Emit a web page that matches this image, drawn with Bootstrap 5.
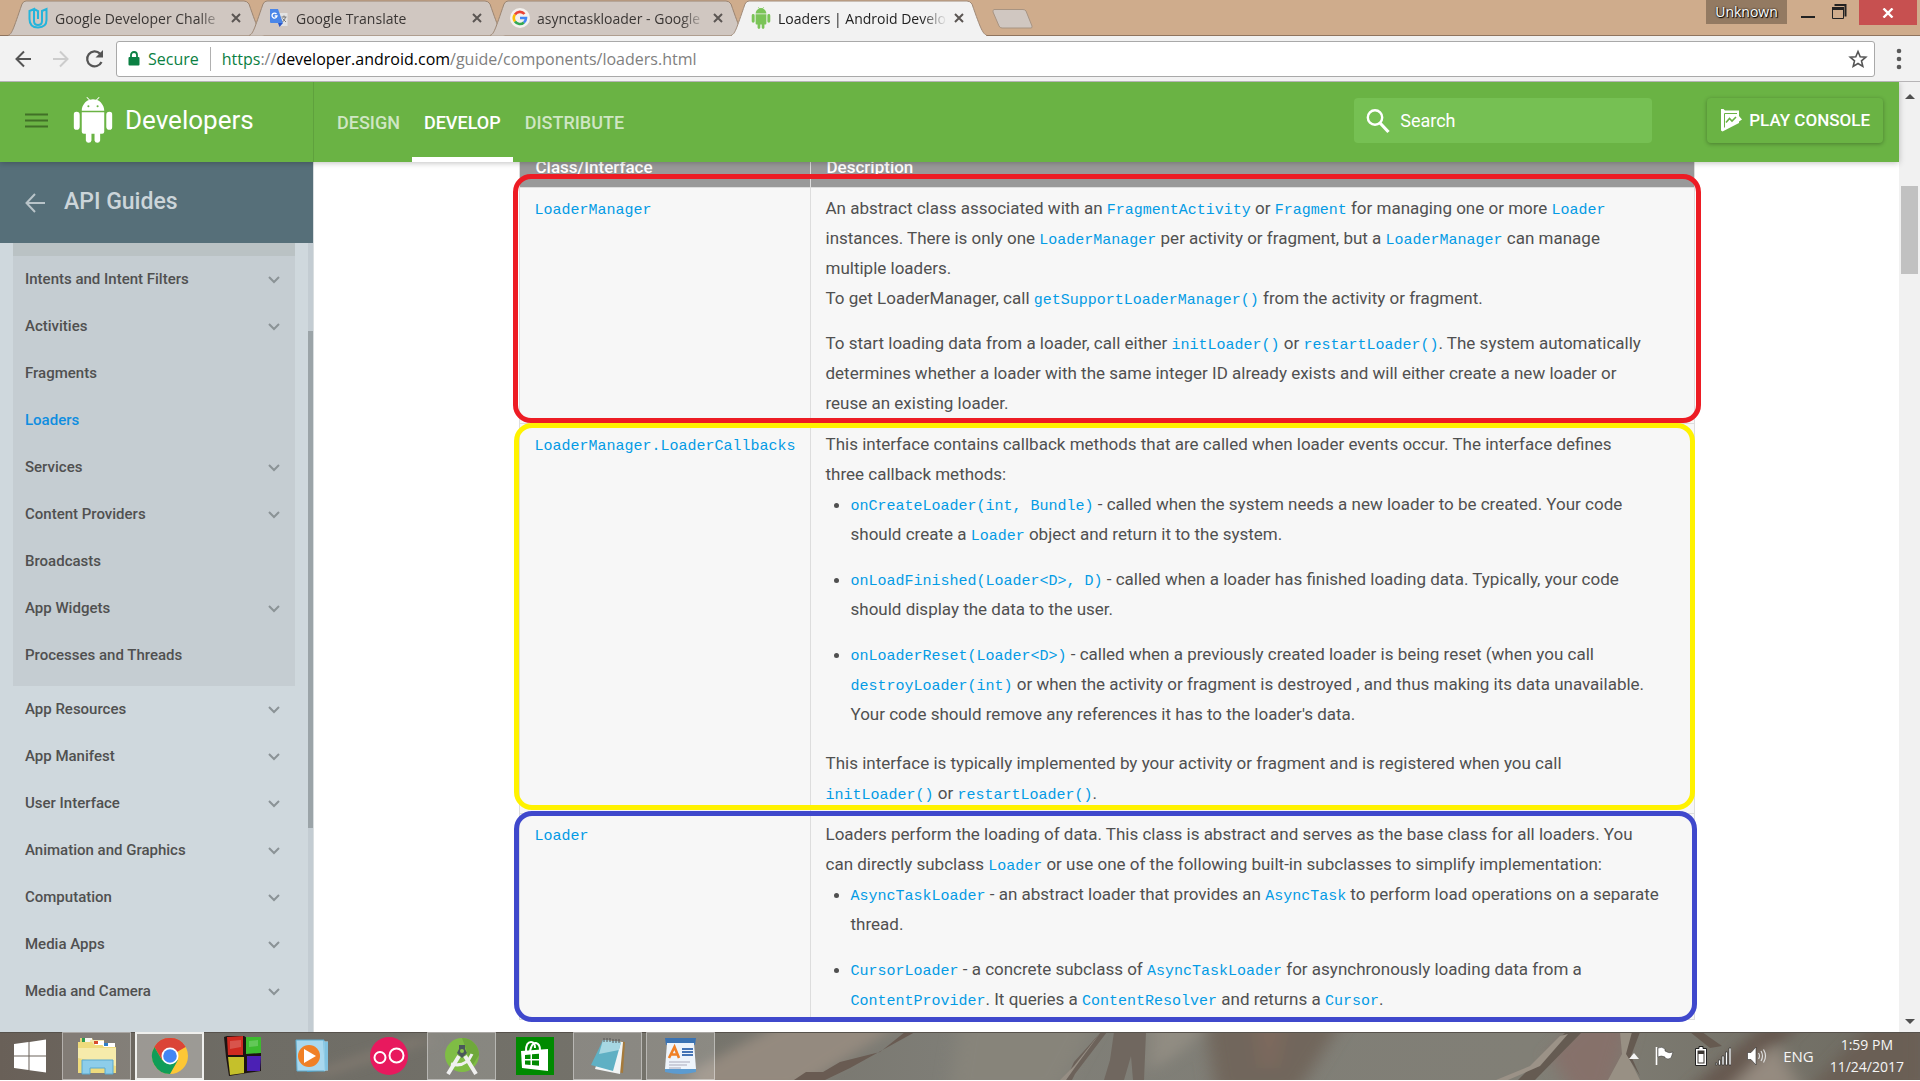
<!DOCTYPE html>
<html lang="en">
<head>
<meta charset="utf-8">
<meta name="viewport" content="width=device-width, initial-scale=1">
<title>Loaders | Android Developers</title>
<link rel="stylesheet" href="https://cdn.jsdelivr.net/npm/bootstrap@5.3.0/dist/css/bootstrap.min.css">
<style>
  body { font-family: Roboto, "Liberation Sans", sans-serif; font-size: 17px; color: #505050; background: #fff; padding-bottom: 1px; }
  button { font: inherit; color: inherit; }
  svg { display: block; flex: none; }
  a { text-decoration: none; }
  .os-text { font-family: "Open Sans", "Noto Sans", sans-serif; }

  /* browser frame */
  .tab-strip { height: 36px; background: #cfac8c; border-bottom: 1px solid #8f745e; padding-left: 8px; }
  .page-tab { position: relative; width: 256px; height: 36px; margin-right: -15px; padding: 0 23px 0 20px; gap: 7px; font-size: 14px; color: #3a3634; border: 0; background: none; }
  .page-tab .tab-shape { position: absolute; inset: 0; width: 100%; height: 100%; }
  .page-tab > *:not(.tab-shape) { position: relative; }
  .page-tab.active { color: #222; z-index: 2; }
  .tab-title { flex: 1; text-align: left; white-space: nowrap; overflow: hidden; -webkit-mask-image: linear-gradient(90deg, #000 85%, transparent); mask-image: linear-gradient(90deg, #000 85%, transparent); }
  .new-tab { margin-left: 19px; }
  .profile-btn { width: 81px; height: 24px; background: #937a62; color: #fff; border: 0; font-size: 14px; line-height: 22px; padding: 0; text-shadow: 0 0 2px #000, 1px 1px 1px #000; }
  .win-btn { border: 0; background: none; padding: 0; }
  .win-min { margin-left: 14px; }
  .win-close { width: 58px; height: 25px; background: #c75050; border: 0; margin-right: 3px; }
  .tool-bar { height: 46px; background: #f2f2f2; border-bottom: 1px solid #b6b4b6; padding: 0 10px 0 15px; }
  .omnibox { height: 36px; margin: 0 17px 0 12px; background: #fff; border: 1px solid #a9a9a9; border-radius: 3px; font-size: 16px; color: #808080; padding: 0 6px 0 11px; }
  .omnibox .ssl { color: #0b8043; }
  .omnibox .rule { width: 1px; height: 24px; background: #b0b0b0; margin: 0 11px; }

  /* site header */
  .site-header { height: 80px; background: #6ab344; color: #fff; z-index: 5; position: relative; box-shadow: 0 1px 6px rgba(0,0,0,.25); }
  .brand-area { width: 314px; border-right: 1px solid #5fa13d; padding-left: 25px; }
  .brand-name { font-size: 26px; margin-left: 11px; }
  .main-nav { padding-left: 11px; }
  .main-nav a { display: flex; align-items: center; height: 80px; padding: 0 12px; color: #cfe6c3; font-size: 18px; font-weight: 500; border-bottom: 5px solid transparent; border-top: 5px solid transparent; }
  .main-nav a.active { color: #fff; border-bottom-color: #fff; }
  .search-box { width: 298px; height: 45px; margin-bottom: 3px; background: #76c053; border-radius: 4px; padding: 0 12px; gap: 10px; }
  .search-box input { border: 0; background: none; color: #fff; outline: 0; width: 100%; padding: 0; font-size: 18px; }
  .search-box input::placeholder { color: #fff; opacity: 1; }
  .console-btn { height: 45px; margin: 0 16px 3px 55px; border: 0; border-radius: 4px; background: #6ab344; color: #fff; font-weight: 500; padding: 0 13px 0 14px; gap: 7px; box-shadow: 0 1px 4px rgba(0,0,0,.3); }

  /* guide navigation */
  .side { width: 314px; background: #cfd8dd; border-right: 1px solid #d9dee0; position: relative; }
  .side-head { height: 81px; background: #566f79; color: #ccd5d9; font-size: 23px; font-weight: 500; padding-left: 25px; gap: 18px; margin-right: -1px; }
  .side-open { margin: 0 18px 0 13px; background: #c5cdd2; border-top: 13px solid #bac2c4; padding-bottom: 7px; }
  .side a { display: flex; align-items: center; justify-content: space-between; height: 47px; padding: 0 15px 0 12px; font-size: 15px; font-weight: 500; color: #505050; }
  .side a.active { color: #0f8de0; }
  .side-rest { margin: 0 18px 0 13px; }
  .side-track { position: absolute; top: 81px; right: 0; bottom: 0; width: 5px; background: #c3ccd2; }
  .side-thumb { height: 63%; margin-top: 88px; background: #9ba4a8; }

  /* article */
  .article { margin-top: -20px; }
  .doc-table { max-width: 1176px; width: 100%; table-layout: fixed; background: #f7f7f7; line-height: 30px; }
  .doc-table, .doc-table td, .doc-table th { border: 1px solid #ddd; }
  .doc-table th { background: #999; color: #fff; font-weight: 500; height: 45px; padding: 9px 16px 5px; }
  .doc-table th:first-child { width: 291px; }
  .doc-table td { vertical-align: top; padding: 5px 15px; }
  .doc-table tr { position: relative; }
  .doc-table code { font-family: "Liberation Mono", "DejaVu Sans Mono", monospace; font-size: 15px; line-height: 1; color: #039be5; white-space: nowrap; }
  .doc-table p { margin: 0 0 15px; }
  .doc-table p:last-child { margin-bottom: 0; }
  .doc-table ul { margin: 0 0 19px; padding-left: 25px; }
  .doc-table ul:last-child { margin-bottom: 0; }
  .doc-table li + li { margin-top: 15px; }
  .pen-frame { position: absolute; border: 5px solid; border-radius: 18px; pointer-events: none; }
  .pen-red { border-color: #ed1c24; inset: -14px -7px 1px -6px; z-index: 2; }
  .pen-yellow { border-color: #fff200; inset: -1px -1px 4px -5px; }
  .pen-blue { border-color: #3f48cc; inset: -3px -3px -2px -5px; }
  .page-scroll { width: 21px; background: #f1f1f1; }
  .page-scroll .thumb { width: 17px; height: 88px; margin-bottom: auto; margin-top: 87px; background: #c1c1c1; }

  /* desktop bar */
  .task-bar { position: relative; height: 48px; background: #6f6a61; color: #f5f5f5; font-size: 15px; }
  .task-scene { position: absolute; inset: 0; width: 100%; height: 100%; }
  .task-bar > *:not(.task-scene) { position: relative; }
  .start-btn { width: 62px; padding-left: 14px; }
  .task-item { width: 69px; height: 48px; margin-right: 4px; border: 1px solid transparent; background: none; padding: 0; display: flex; align-items: center; justify-content: center; }
  .task-item.open { border-color: rgba(255,255,255,.4); background: rgba(255,255,255,.16); }
  .task-item.front { border: 2px solid #efefed; background: rgba(255,255,255,.32); }
  .clock-text { line-height: 22px; font-size: 14px; }
</style>
</head>
<body class="d-flex flex-column vh-100 overflow-hidden">

<svg width="0" height="0" class="position-absolute" aria-hidden="true">
  <defs>
    <symbol id="chev" viewBox="0 0 12 8"><path d="M1 1l5 5 5-5" fill="none" stroke="#8b9396" stroke-width="2"/></symbol>
    <symbol id="cross" viewBox="0 0 10 10"><path d="M1 1l8 8M9 1L1 9" stroke="#5b5653" stroke-width="2"/></symbol>
    <symbol id="tab-off" viewBox="0 0 256 36" preserveAspectRatio="none"><path d="M0 35.500C4 34 5 30 14 4Q15.500 1 18 1H236Q239 1 241 4C250 30 252 34 256 35.500" fill="#d0c7c1" stroke="#9b8572"/></symbol>
    <symbol id="tab-on" viewBox="0 0 256 36" preserveAspectRatio="none"><path d="M0 35.500C4 34 5 30 14 4Q15.500 1 18 1H236Q239 1 241 4C250 30 252 34 256 35.500" fill="#f2f2f2" stroke="#a08a78"/><path d="M1 36H255" stroke="#f2f2f2" stroke-width="2"/></symbol>
    <symbol id="robot" viewBox="0 0 38 45"><path d="M8 13.500C8 8 12 4 15 3L12.500.4 13.300 0 16 2.700Q19 1.900 22 2.700L24.700 0 25.500.4 23 3C26 4 30 8 30 13.500ZM8 15H30V34Q30 36 28 36H26V42.500A2.800 2.800 0 0 1 20.500 42.500V36H17.500V42.500A2.800 2.800 0 0 1 12 42.500V36H10Q8 36 8 34ZM0 17.500A3 3 0 0 1 6 17.500V29A3 3 0 0 1 0 29ZM32 17.500A3 3 0 0 1 38 17.500V29A3 3 0 0 1 32 29Z"/></symbol>
  </defs>
</svg>

<div class="tab-strip os-text d-flex align-items-start flex-shrink-0" role="tablist">
  <button class="page-tab d-flex align-items-center" role="tab"><svg class="tab-shape"><use href="#tab-off"/></svg>
    <svg width="20" height="22" viewBox="0 0 20 22"><path d="M1.500 4L6 2V14Q6 18 10 18Q14 18 14 14V4L18.500 2V13Q18.500 20 10 20.500Q1.500 20.500 1.500 12ZM6 2L10 4V12" fill="none" stroke="#25b4db" stroke-width="2"/></svg>
    <span class="tab-title">Google Developer Challe</span><svg width="10" height="10"><use href="#cross"/></svg></button>
  <button class="page-tab d-flex align-items-center" role="tab"><svg class="tab-shape"><use href="#tab-off"/></svg>
    <svg width="20" height="20" viewBox="0 0 20 20"><path d="M8 5H18.500V18H12Z" fill="#e3e3e3"/><path d="M1 1H9L14 15H2Q1 15 1 14Z" fill="#4a86e8"/><path d="M9 15H14L10.500 19Z" fill="#2a56c6"/><path d="M7.500 6A2.500 2.500 0 1 0 8 8H5.700" fill="none" stroke="#fff" stroke-width="1.300"/><path d="M12.500 9H17.500M15 7.500V9M16.500 9Q16 12 13.500 14M13.500 10.500L17 14" fill="none" stroke="#777" stroke-width="1"/></svg>
    <span class="tab-title">Google Translate</span><svg width="10" height="10"><use href="#cross"/></svg></button>
  <button class="page-tab d-flex align-items-center" role="tab"><svg class="tab-shape"><use href="#tab-off"/></svg>
    <svg width="20" height="20" viewBox="0 0 20 20"><circle cx="10" cy="10" r="10" fill="#f4f1ee"/><g fill="none" stroke-width="2.600"><path d="M5 6.500A6 6 0 0 1 14.500 6" stroke="#ea4335"/><path d="M5 13.500A6 6 0 0 1 5 6.500" stroke="#fbbc05"/><path d="M13.900 14.500A6 6 0 0 1 5 13.500" stroke="#34a853"/><path d="M10 10H16A6 6 0 0 1 13.900 14.500" stroke="#4285f4"/></g></svg>
    <span class="tab-title">asynctaskloader - Google</span><svg width="10" height="10"><use href="#cross"/></svg></button>
  <button class="page-tab active d-flex align-items-center" role="tab" aria-selected="true"><svg class="tab-shape"><use href="#tab-on"/></svg>
    <svg width="20" height="22" fill="#7ac457"><use href="#robot"/></svg>
    <span class="tab-title">Loaders | Android Develo</span><svg width="10" height="10"><use href="#cross"/></svg></button>
  <button class="win-btn new-tab pt-2" aria-label="New tab"><svg width="44" height="22" viewBox="0 0 44 22"><path d="M3 1.500H32Q34 1.500 35 3L41 18Q41.500 20 40 20H11Q9 20 8 18L2 4Q1.500 2 3 1.500Z" fill="#d0c7c1" stroke="#a89482"/></svg></button>
  <div class="ms-auto d-flex align-items-start">
    <button class="profile-btn">Unknown</button>
    <button class="win-btn win-min" aria-label="Minimize"><svg width="14" height="24"><path d="M0 17H14" stroke="#222" stroke-width="2"/></svg></button>
    <button class="win-btn mx-2 ps-2" aria-label="Restore"><svg width="20" height="22" viewBox="0 0 20 22"><path d="M3.500 5H14.500V16.500" fill="none" stroke="#222" stroke-width="2"/><path d="M1.500 9V18.500H12.500V9" fill="none" stroke="#222" stroke-width="1"/><path d="M1 8.500H13" stroke="#222" stroke-width="3"/></svg></button>
    <button class="win-close d-flex justify-content-center align-items-center" aria-label="Close"><svg width="12" height="10" viewBox="0 0 12 10"><path d="M1.500 0.500L10.500 9.500M10.500 0.500L1.500 9.500" stroke="#fff" stroke-width="2.400"/></svg></button>
  </div>
</div>

<div class="tool-bar d-flex align-items-center flex-shrink-0">
  <button class="win-btn" aria-label="Back"><svg width="17" height="18" viewBox="0 0 17 18"><path d="M9 1.500L1.500 9L9 16.500M1.500 9H16" fill="none" stroke="#555" stroke-width="2"/></svg></button>
  <button class="win-btn ms-3 ps-1" aria-label="Forward"><svg width="17" height="18" viewBox="0 0 17 18"><path d="M8 1.500L15.500 9L8 16.500M15.500 9H1" fill="none" stroke="#ccc" stroke-width="2"/></svg></button>
  <button class="win-btn ms-3" aria-label="Reload"><svg width="19" height="20" viewBox="0 0 19 20"><path d="M16.500 13A7.500 7.500 0 1 1 15 4.600" fill="none" stroke="#555" stroke-width="2.200"/><path d="M18 1V8.500H10.500Z" fill="#555"/></svg></button>
  <div class="omnibox os-text flex-grow-1 d-flex align-items-center">
    <svg width="12" height="15" viewBox="0 0 12 15"><path d="M3 7V4A3 3 0 0 1 9 4V7" fill="none" stroke="#0b8043" stroke-width="1.800"/><rect x="0.500" y="6" width="11" height="8.500" rx="1" fill="#0b8043"/></svg>
    <span class="ssl ms-2">Secure</span><span class="rule"></span>
    <span><span class="ssl">https</span>://<span class="text-black">developer.android.com</span>/guide/components/loaders.html</span>
    <svg class="ms-auto" width="20" height="20" viewBox="0 0 20 20"><path d="M10 2.500L12.200 7.700L17.800 8.200L13.500 11.900L14.800 17.400L10 14.500L5.200 17.400L6.500 11.900L2.200 8.200L7.800 7.700Z" fill="none" stroke="#555" stroke-width="1.600"/></svg>
  </div>
  <button class="win-btn me-2 ms-1" aria-label="Menu"><svg width="6" height="22" fill="#5a5a5a"><circle cx="3" cy="3" r="2.300"/><circle cx="3" cy="11" r="2.300"/><circle cx="3" cy="19" r="2.300"/></svg></button>
</div>

<div class="d-flex flex-grow-1 overflow-hidden">
  <div class="d-flex flex-column flex-grow-1">
    <header class="site-header d-flex align-items-center flex-shrink-0">
      <div class="brand-area d-flex align-items-center h-100 pb-1">
        <button class="win-btn" aria-label="Menu"><svg width="23" height="15"><path d="M0 1.500H23M0 7.500H23M0 13.500H23" stroke="#417027" stroke-width="2"/></svg></button>
        <svg class="ms-4" width="42" height="46" viewBox="0 0 38 45"><use href="#robot" fill="#fff"/><circle cx="14.500" cy="9" r="1" fill="#6ab344"/><circle cx="23.500" cy="9" r="1" fill="#6ab344"/></svg>
        <span class="brand-name">Developers</span>
      </div>
      <nav class="main-nav d-flex">
        <a href="#">DESIGN</a><a href="#" class="active">DEVELOP</a><a href="#">DISTRIBUTE</a>
      </nav>
      <div class="search-box d-flex align-items-center ms-auto">
        <svg width="24" height="26" viewBox="0 0 24 26"><circle cx="9" cy="9.500" r="7.200" fill="none" stroke="#fff" stroke-width="2.400"/><path d="M14 15L22.500 24" stroke="#fff" stroke-width="3.200"/></svg>
        <input type="text" placeholder="Search" aria-label="Search">
      </div>
      <button class="console-btn d-flex align-items-center">
        <svg width="21" height="23" viewBox="0 0 21 23"><path d="M0 0H2.500L4 1.500H18V7L21 10.500L18 12.500V14L1.500 22.500L0 21.500Z" fill="#fff"/><path d="M3.500 4.500H16M3.500 4.500V18.500" stroke="#6ab344" stroke-width="1" fill="none"/><path d="M5 13.500L8.500 9.500L11 12L15 8" stroke="#6ab344" stroke-width="1.600" fill="none"/></svg>
        PLAY CONSOLE</button>
    </header>

    <div class="d-flex flex-grow-1 overflow-hidden">
      <aside class="side flex-shrink-0 overflow-hidden">
        <div class="side-head d-flex align-items-center">
          <svg width="21" height="20" viewBox="0 0 21 20"><path d="M10 1L1.500 10L10 19M1.500 10H20" fill="none" stroke="#b9c4c9" stroke-width="2"/></svg>API Guides</div>
        <nav class="side-open">
          <a href="#">Intents and Intent Filters<svg width="12" height="8"><use href="#chev"/></svg></a>
          <a href="#">Activities<svg width="12" height="8"><use href="#chev"/></svg></a>
          <a href="#">Fragments</a>
          <a href="#" class="active">Loaders</a>
          <a href="#">Services<svg width="12" height="8"><use href="#chev"/></svg></a>
          <a href="#">Content Providers<svg width="12" height="8"><use href="#chev"/></svg></a>
          <a href="#">Broadcasts</a>
          <a href="#">App Widgets<svg width="12" height="8"><use href="#chev"/></svg></a>
          <a href="#">Processes and Threads</a>
        </nav>
        <nav class="side-rest">
          <a href="#">App Resources<svg width="12" height="8"><use href="#chev"/></svg></a>
          <a href="#">App Manifest<svg width="12" height="8"><use href="#chev"/></svg></a>
          <a href="#">User Interface<svg width="12" height="8"><use href="#chev"/></svg></a>
          <a href="#">Animation and Graphics<svg width="12" height="8"><use href="#chev"/></svg></a>
          <a href="#">Computation<svg width="12" height="8"><use href="#chev"/></svg></a>
          <a href="#">Media Apps<svg width="12" height="8"><use href="#chev"/></svg></a>
          <a href="#">Media and Camera<svg width="12" height="8"><use href="#chev"/></svg></a>
        </nav>
        <div class="side-track"><div class="side-thumb"></div></div>
      </aside>

      <main class="flex-grow-1 overflow-hidden">
        <div class="article">
          <table class="doc-table mx-auto">
            <thead><tr><th>Class/Interface</th><th>Description</th></tr></thead>
            <tbody>
              <tr>
                <td><a href="#"><code>LoaderManager</code></a><span class="pen-frame pen-red"></span></td>
                <td>An abstract class associated with an <a href="#"><code>FragmentActivity</code></a> or <a href="#"><code>Fragment</code></a> for managing one or more <a href="#"><code>Loader</code></a><br>instances. There is only one <a href="#"><code>LoaderManager</code></a> per activity or fragment, but a <a href="#"><code>LoaderManager</code></a> can manage<br>multiple loaders.
                  <p>To get LoaderManager, call <a href="#"><code>getSupportLoaderManager()</code></a> from the activity or fragment.</p>
                  <p>To start loading data from a loader, call either <a href="#"><code>initLoader()</code></a> or <a href="#"><code>restartLoader()</code></a>. The system automatically<br>determines whether a loader with the same integer ID already exists and will either create a new loader or<br>reuse an existing loader.</p></td>
              </tr>
              <tr>
                <td><a href="#"><code>LoaderManager.LoaderCallbacks</code></a><span class="pen-frame pen-yellow"></span></td>
                <td>This interface contains callback methods that are called when loader events occur. The interface defines<br>three callback methods:
                  <ul>
                    <li><a href="#"><code>onCreateLoader(int, Bundle)</code></a> - called when the system needs a new loader to be created. Your code<br>should create a <a href="#"><code>Loader</code></a> object and return it to the system.</li>
                    <li><a href="#"><code>onLoadFinished(Loader&lt;D&gt;, D)</code></a> - called when a loader has finished loading data. Typically, your code<br>should display the data to the user.</li>
                    <li><a href="#"><code>onLoaderReset(Loader&lt;D&gt;)</code></a> - called when a previously created loader is being reset (when you call<br><a href="#"><code>destroyLoader(int)</code></a> or when the activity or fragment is destroyed , and thus making its data unavailable.<br>Your code should remove any references it has to the loader's data.</li>
                  </ul>
                  <p>This interface is typically implemented by your activity or fragment and is registered when you call<br><a href="#"><code>initLoader()</code></a> or <a href="#"><code>restartLoader()</code></a>.</p></td>
              </tr>
              <tr>
                <td><a href="#"><code>Loader</code></a><span class="pen-frame pen-blue"></span></td>
                <td>Loaders perform the loading of data. This class is abstract and serves as the base class for all loaders. You<br>can directly subclass <a href="#"><code>Loader</code></a> or use one of the following built-in subclasses to simplify implementation:
                  <ul>
                    <li><a href="#"><code>AsyncTaskLoader</code></a> - an abstract loader that provides an <a href="#"><code>AsyncTask</code></a> to perform load operations on a separate<br>thread.</li>
                    <li><a href="#"><code>CursorLoader</code></a> - a concrete subclass of <a href="#"><code>AsyncTaskLoader</code></a> for asynchronously loading data from a<br><a href="#"><code>ContentProvider</code></a>. It queries a <a href="#"><code>ContentResolver</code></a> and returns a <a href="#"><code>Cursor</code></a>.</li>
                  </ul></td>
              </tr>
            </tbody>
          </table>
        </div>
      </main>
    </div>
  </div>
  <div class="page-scroll d-flex flex-column align-items-center flex-shrink-0 position-relative py-2">
    <svg class="mt-1" width="10" height="5"><path d="M0 5L5 0L10 5Z" fill="#505050"/></svg>
    <div class="thumb"></div>
    <svg width="10" height="5"><path d="M0 0L5 5L10 0Z" fill="#505050"/></svg>
  </div>
</div>

<footer class="task-bar os-text d-flex align-items-center flex-shrink-0">
  <svg class="task-scene" viewBox="0 0 1920 48" preserveAspectRatio="none">
    <defs>
      <linearGradient id="wall"><stop offset="0" stop-color="#696058"/><stop offset=".12" stop-color="#6e6c65"/><stop offset=".36" stop-color="#75736b"/><stop offset=".5" stop-color="#7f7e77"/><stop offset=".8" stop-color="#817f76"/><stop offset="1" stop-color="#6d6a60"/></linearGradient>
      <filter id="soft" x="-10%" y="-50%" width="120%" height="200%"><feGaussianBlur stdDeviation="9 5"/></filter>
    </defs>
    <rect width="1920" height="48" fill="url(#wall)"/>
    <g filter="url(#soft)">
      <path d="M310 40L420 4L430 10L320 46Z" fill="#817970"/>
      <path d="M780 -8H900L800 56H690V40Z" fill="#948a7f"/>
      <path d="M960 -8H1095L1060 56H950Z" fill="#87847a"/>
      <path d="M1150 -8H1210L1180 20L1150 40Z" fill="#918c82"/>
      <path d="M1205 -8H1340L1300 56H1215Z" fill="#71665c"/>
      <path d="M1255 -8H1285L1275 36H1262Z" fill="#7e695d"/>
      <path d="M1550 22L1580 -8H1630L1612 56H1570Z" fill="#86716a"/>
      <path d="M1690 56L1765 -8H1800L1735 56Z" fill="#66584f"/>
      <path d="M1730 56L1775 10L1800 56Z" fill="#958b80"/>
      <path d="M1810 56L1870 -8H1925V56Z" fill="#6b5e54"/>
    </g>
    <path d="M905 0H915L850 36L825 48H794L806 40L823 40L840 30L880 20Z" fill="#695b52"/>
    <path d="M1101 0H1107L1075 42L1072 48H1066L1074 30Z" fill="#6c625a"/>
    <path d="M1101 0L1074 34L1060 48H1066L1076 34Z" fill="#968e84"/>
    <path d="M1114 0H1146L1144 48H1133L1131 24L1124 48H1104L1110 28Z" fill="#70675f"/>
    <path d="M1566 0H1582L1535 48H1518L1530 36Z" fill="#655b52"/>
    <path d="M1560 4L1530 34L1496 48H1508L1540 34L1568 2Z" fill="#9b9287"/>
    <path d="M1620 0H1638L1628 24L1640 48H1608L1622 22Z" fill="#989084"/>
    <path d="M1632 0H1640L1631 24L1640 44L1626 22Z" fill="#655a51"/>
    <path d="M1690 0H1702L1722 14L1710 16Z" fill="#665a50"/>
    <path d="M0 .5H1920" stroke="#57524c"/>
  </svg>
  <button class="win-btn start-btn" aria-label="Start"><svg width="34" height="34" viewBox="0 0 34 34"><path d="M0 5L14.500 3V16.500H0ZM15.500 2.900L32 .5V16.500H15.500ZM0 17.500H14.500V31L0 29ZM15.500 17.500H32V33.500L15.500 31.200Z" fill="#fff"/></svg></button>
  <button class="task-item open" aria-label="File Explorer"><svg width="42" height="40" viewBox="0 0 42 40"><path d="M4 2L16 2L18 6H4Z" fill="#e5d27d"/><path d="M6 2h10v6H6z" fill="#f5f5ef"/><path d="M6 2h3v4H6z" fill="#2c9c50"/><path d="M14 4H28V10H14Z" fill="#f3e7ae"/><path d="M19 5h9v4h-9z" fill="#fff"/><path d="M18 5h4v3h-4z" fill="#d84a2c"/><path d="M27 7h12v5H27z" fill="#fff"/><path d="M28 7h4v3h-4z" fill="#2f80c8"/><path d="M2 6H16L18 9H26L28 11H40V37H2Z" fill="#efdb7d"/><path d="M2 12H40V30L2 22Z" fill="#f6ebab"/><path d="M6 24H37V38H29V32H14V38H6Z" fill="#8dcdea" stroke="#5aa9cf"/></svg></button>
  <button class="task-item front" aria-label="Chrome"><svg width="38" height="38" viewBox="0 0 38 38"><circle cx="19" cy="19" r="18" fill="#fdc735"/><path d="M19 19L3.400 10A18 18 0 0 1 34.600 10Z" fill="#db4437"/><path d="M19 10H34.600A18 18 0 0 0 3.400 10L11 23Z" fill="#db4437"/><path d="M3.400 10A18 18 0 0 0 19 37L27 23L19 27L11 23Z" fill="#109d58"/><circle cx="19" cy="19" r="8.500" fill="#fff"/><circle cx="19" cy="19" r="6.800" fill="#4286f4"/></svg></button>
  <button class="task-item" aria-label="Blocks"><svg width="38" height="42" viewBox="0 0 38 42"><path d="M0 2L3 1L20 1L23 3L37 2V36L23 38L5 41L2 22Z" fill="#1d1412"/><path d="M3 2L19 1V20H4Z" fill="#cf2a20"/><path d="M22 2L37 2V18L22 19Z" fill="#3dbb2f"/><path d="M4 22H20L20 38L6 40Z" fill="#c5c02b"/><path d="M23 21H37L36 36L23 36Z" fill="#4b20b4"/><path d="M6 6L17 5V12L6 14ZM25 6L34 5V11L25 12Z" fill="#fff" opacity=".2"/></svg></button>
  <button class="task-item pe-2" aria-label="Media Player"><svg width="34" height="36" viewBox="0 0 34 36"><path d="M12 2L33 4V32L12 34Z" fill="#3f9cc9"/><path d="M1 2H29L30 33H2Z" fill="#a9d8ee" stroke="#5cadd2"/><path d="M30 3V33M32 3V33" stroke="#c4e8f7"/><circle cx="14" cy="18" r="11" fill="#f08026"/><path d="M9 11L21 18L9 25Z" fill="#fff"/></svg></button>
  <button class="task-item" aria-label="Recorder"><svg width="38" height="38" viewBox="0 0 38 38"><circle cx="19" cy="19" r="19" fill="#e8195e"/><circle cx="10" cy="20.500" r="5.500" fill="none" stroke="#fff" stroke-width="2"/><circle cx="26.500" cy="18.500" r="7" fill="none" stroke="#fff" stroke-width="2"/></svg></button>
  <button class="task-item open" aria-label="Android Studio"><svg width="36" height="40" viewBox="0 0 36 40"><circle cx="18" cy="19" r="17" fill="#7fbd45"/><path d="M18 2A17 17 0 0 1 35 19L28 30Z" fill="#6fa83b"/><path d="M15 9H21V13L23 17L18 22L13 17L15 13Z" fill="#4b575b"/><circle cx="18" cy="15" r="2" fill="#8bc34a"/><path d="M15 20L4 38M21 20L32 38" stroke="#f0f0f0" stroke-width="4"/><path d="M7 28Q22 32 28 18" fill="none" stroke="#f0f0f0" stroke-width="3"/></svg></button>
  <button class="task-item" aria-label="Store"><svg width="38" height="38" viewBox="0 0 38 38"><path d="M0 0H38V38H0Z" fill="#008a00"/><path d="M10 14Q10 5 15 5Q19 5 19 11M14 14Q16 5 20 6Q24 7 24 13" fill="none" stroke="#fff" stroke-width="2"/><path d="M5 14L32 12V34L6 31Z" fill="#fff"/><path d="M9 18L14.500 17.500V22H9ZM16 17.300L23 16.800V22H16ZM9 23.500H14.500V28L9 27.500ZM16 23.500H23V28.800L16 28Z" fill="#008a00"/></svg></button>
  <button class="task-item open" aria-label="Notepad"><svg width="38" height="38" viewBox="0 0 38 38"><path d="M16 3L36 5L34 36L28 35Z" fill="#a57a3c"/><path d="M15 3L34 5L31 37L6 32Z" fill="#f1f4f5"/><path d="M14 3L32 5L24 34L2 28Z" fill="#5fb0c4"/><path d="M14 3L32 5L30 13L10 17Z" fill="#a7d7e2"/><path d="M15 1V5M18 1V5M21 1V5M24 2V6M27 2V6M30 2V6" stroke="#555"/></svg></button>
  <button class="task-item open" aria-label="WordPad"><svg width="36" height="38" viewBox="0 0 36 38"><path d="M2 1H33L32 8H3Z" fill="#3b73b3"/><path d="M4 6H31L33 32H2Z" fill="#eef4fb"/><path d="M2 32H33V35Q18 39 2 35Z" fill="#5c9bd0"/><path d="M6 21L11.500 10L16 21M8 17.500H15" fill="none" stroke="#f08026" stroke-width="2.600"/><path d="M19 12H30M19 15H30M19 18H30" stroke="#4574b5" stroke-width="2"/><path d="M6 25H27M6 28H24M6 31H18" stroke="#aab"/></svg></button>

  <div class="ms-auto d-flex align-items-center pe-3">
    <svg width="10" height="6"><path d="M0 6L5 0L10 6Z" fill="#f5f5f5"/></svg>
    <svg class="ms-3 me-1" width="20" height="20" viewBox="0 0 20 20"><path d="M1.500 1V19" stroke="#fff" stroke-width="1.600"/><path d="M3 2Q7 0 10 3V5Q14 8 18 6L16 12Q13 14 10 12V11Q6 9 3 11Z" fill="#fff" stroke="#333" stroke-width=".5"/></svg>
    <svg class="ms-3" width="12" height="20" viewBox="0 0 12 20"><path d="M4 .5H8V2.500H11.500V19.500H.5V2.500H4Z" fill="#fff" stroke="#222"/><path d="M2.500 4.500H9.500V17.500H2.500Z" fill="#3a3632"/><path d="M3.500 8H8.500V16.500H3.500Z" fill="#fff"/></svg>
    <svg class="ms-2 me-2" width="16" height="20" viewBox="0 0 16 20"><path d="M.5 19V17H2V19ZM3.500 19V14H5.500V19ZM7 19V10H9V19ZM10.500 19V6H12.500V19ZM14 19V2H16V19Z" fill="#fff" stroke="#222" stroke-width=".6"/></svg>
    <svg class="ms-2" width="20" height="20" viewBox="0 0 20 20"><path d="M0.500 6.500H4L9 1V19L4 13.500H.5Z" fill="#fff" stroke="#333" stroke-width=".6"/><path d="M11.500 7Q13.500 10 11.500 13M14 5Q17 10 14 15M16.500 3.500Q20.500 10 16.500 16.500" fill="none" stroke="#ddd" stroke-width="1.200"/></svg>
    <span class="ms-3">ENG</span>
    <div class="clock-text text-center ms-3">1:59 PM<br>11/24/2017</div>
  </div>
</footer>

<script src="https://cdn.jsdelivr.net/npm/bootstrap@5.3.0/dist/js/bootstrap.bundle.min.js"></script>
</body>
</html>
